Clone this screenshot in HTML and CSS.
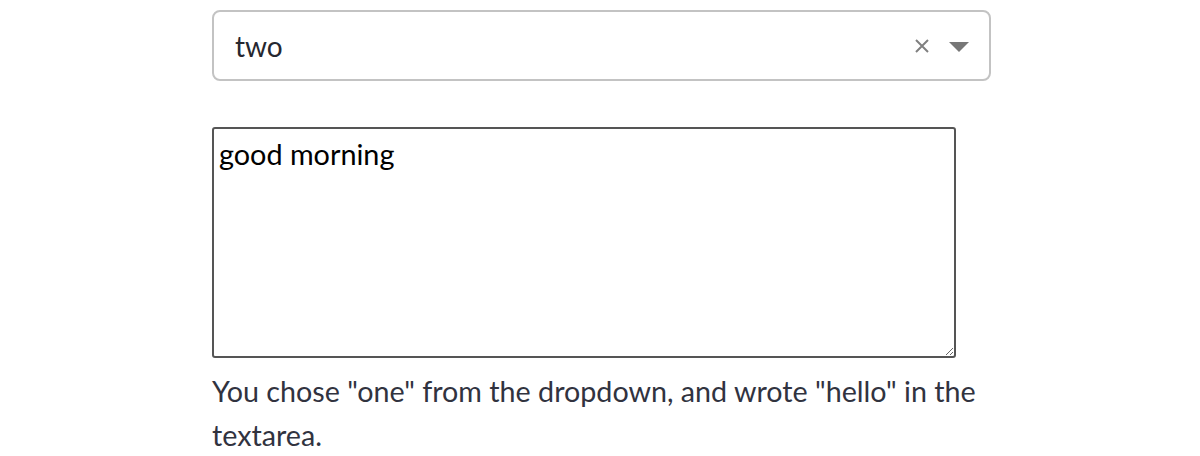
FILE: index.html
```html
<!DOCTYPE html>
<html>
<head>
<meta charset="utf-8">
<link rel="stylesheet" href="styles.css">
</head>
<body>
<main class="page">
  <div class="select">
    <span class="select-value">two</span>
    <span class="select-icons">
      <svg class="clear" width="14" height="14" viewBox="0 0 14 14"><path d="M1 1 L13 13 M13 1 L1 13" stroke="#808080" stroke-width="2" fill="none"/></svg>
      <svg class="caret" width="20" height="10" viewBox="0 0 20 10"><path d="M0 0 H20 L10 10 Z" fill="#777"/></svg>
    </span>
  </div>
  <div class="area-wrap">
    <textarea class="area">good morning</textarea>
  </div>
  <p class="result">You chose "one" from the dropdown, and wrote "hello" in the textarea.</p>
</main>
</body>
</html>
```
FILE: styles.css
```css
html, body {
  margin: 0;
  padding: 0;
  background: #fff;
}
.page {
  width: 779px;
  padding: 10px 0 0 212px;
  font-family: Lato, "Noto Sans", sans-serif;
}
.select {
  box-sizing: border-box;
  height: 71px;
  border: 2px solid #c3c3c3;
  border-radius: 8px;
  display: flex;
  align-items: center;
  justify-content: space-between;
  padding: 0 20px 0 21px;
}
.select-value {
  font-size: 28px;
  color: #262730;
}
.select-icons {
  display: flex;
  align-items: center;
  gap: 20px;
}
.caret {
  margin-top: 2px;
}
.area-wrap {
  margin-top: 46px;
  width: 744px;
  height: 231px;
}
.area {
  box-sizing: border-box;
  width: 744px;
  height: 231px;
  border: 2px solid #555;
  border-radius: 3px;
  padding: 8px 5px;
  margin: 0;
  font-family: Lato, "Noto Sans", sans-serif;
  font-size: 28.8px;
  line-height: 1.2;
  color: #000;
  resize: vertical;
  display: block;
}
.result {
  margin: 11px 0 0;
  font-size: 28.7px;
  line-height: 44px;
  color: #31333f;
}
```
